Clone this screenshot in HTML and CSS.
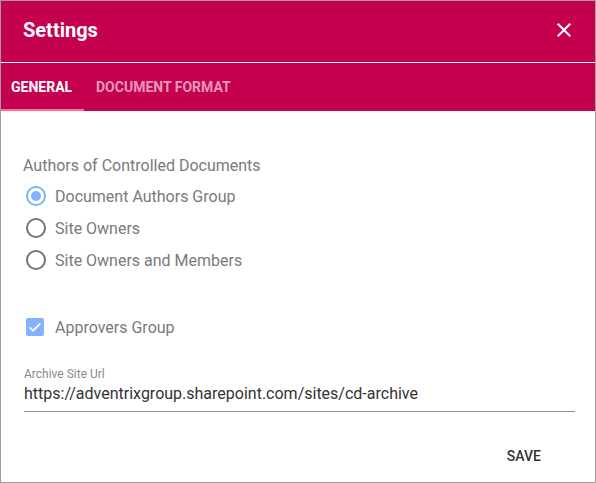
FILE: index.html
```html
<!DOCTYPE html>
<html>
<head>
<meta charset="utf-8">
<link rel="stylesheet" href="styles.css">
</head>
<body>
<div class="dialog">
  <header class="header">
    <h1 class="title">Settings</h1>
    <button class="close" aria-label="Close">
      <svg width="24" height="24" viewBox="0 0 24 24"><path d="M19 6.41 17.59 5 12 10.59 6.41 5 5 6.41 10.59 12 5 17.59 6.41 19 12 13.41 17.59 19 19 17.59 13.41 12z" fill="#fff"/></svg>
    </button>
  </header>
  <nav class="tabs">
    <div class="tab active">GENERAL</div>
    <div class="tab">DOCUMENT FORMAT</div>
  </nav>
  <main class="content">
    <div class="group-label">Authors of Controlled Documents</div>
    <div class="options">
      <label class="option"><span class="radio checked"></span><span class="opt-text">Document Authors Group</span></label>
      <label class="option"><span class="radio"></span><span class="opt-text">Site Owners</span></label>
      <label class="option"><span class="radio"></span><span class="opt-text">Site Owners and Members</span></label>
    </div>
    <label class="option check-row"><span class="checkbox"><svg width="16" height="16" viewBox="0 0 24 24"><path d="M4 12.5 9.2 17.5 20 6.5" fill="none" stroke="#fff" stroke-width="2.6"/></svg></span><span class="opt-text">Approvers Group</span></label>
    <div class="field">
      <div class="field-label">Archive Site Url</div>
      <div class="field-input">https://adventrixgroup.sharepoint.com/sites/cd-archive</div>
    </div>
  </main>
  <footer class="actions">
    <button class="save">SAVE</button>
  </footer>
</div>
</body>
</html>
```
FILE: styles.css
```css
* { box-sizing: border-box; }
html, body { margin: 0; padding: 0; background: #fff; }
body { font-family: Roboto, "Noto Sans", sans-serif; }
.dialog {
  width: 596px;
  height: 483px;
  border: 1px solid #9e9e9e;
  display: flex;
  flex-direction: column;
  background: #fff;
}
.header {
  height: 62px;
  background: #c4004f;
  border-bottom: 1px solid #fff;
  display: flex;
  align-items: center;
  justify-content: space-between;
  padding: 0 19px 3px 22px;
}
.title {
  margin: 0;
  color: #fff;
  font-size: 20px;
  font-weight: 700;
  line-height: 24px;
}
.close {
  background: none;
  border: 0;
  padding: 0;
  width: 24px;
  height: 24px;
  display: flex;
  cursor: pointer;
}
.tabs {
  height: 48px;
  background: #c4004f;
  display: flex;
}
.tab {
  padding: 0 11px 0 10px;
  display: flex;
  align-items: center;
  font-size: 14px;
  font-weight: 700;
  color: rgba(255,255,255,0.6);
  border-bottom: 2px solid transparent;
  padding-top: 2px;
}
.tab.active {
  color: #fff;
  border-bottom-color: #ff6d8f;
  width: 83px;
}
.tab + .tab { padding-left: 12px; }
.content {
  padding: 43px 22px 0 22px;
  flex: 1;
}
.group-label {
  font-size: 16px;
  line-height: 24px;
  color: #7a7a7a;
}
.options {
  margin-top: 2px;
  display: flex;
  flex-direction: column;
}
.option {
  display: flex;
  align-items: center;
  height: 32px;
}
.opt-text {
  font-size: 16px;
  color: #7a7a7a;
  margin-left: 9px;
}
.radio {
  width: 20px;
  height: 20px;
  margin-left: 3px;
  border: 2px solid #757575;
  border-radius: 50%;
  display: flex;
  align-items: center;
  justify-content: center;
}
.radio.checked { border-color: #82b1ff; }
.radio.checked::after {
  content: "";
  width: 10px;
  height: 10px;
  border-radius: 50%;
  background: #82b1ff;
}
.check-row { margin-top: 35px; }
.checkbox {
  width: 18px;
  height: 18px;
  margin-left: 3px;
  margin-right: 2px;
  background: #82b1ff;
  border-radius: 2px;
  display: flex;
  align-items: center;
  justify-content: center;
}
.field {
  margin-top: 23px;
  margin-left: 1px;
  margin-right: -2px;
  border-bottom: 1px solid #949494;
  padding-bottom: 5px;
}
.field-label {
  font-size: 12px;
  line-height: 16px;
  color: #8a8a8a;
}
.field-input {
  font-size: 16px;
  line-height: 24px;
  color: #333;
}
.actions {
  display: flex;
  justify-content: flex-end;
  padding: 0 46px 8px 0;
}
.save {
  background: none;
  border: 0;
  height: 36px;
  padding: 0 8px;
  font-family: Roboto, "Noto Sans", sans-serif;
  font-size: 14px;
  font-weight: 500;
  color: #333;
}
```
